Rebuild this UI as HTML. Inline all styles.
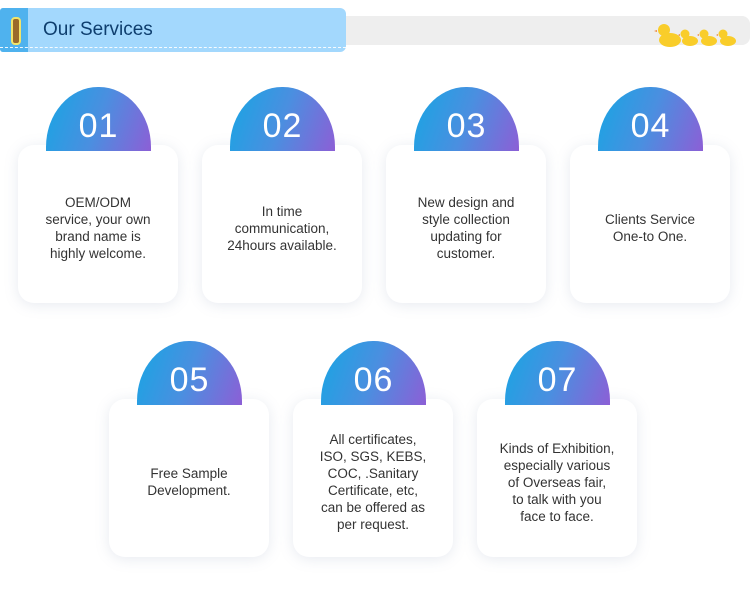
<!DOCTYPE html>
<html><head><meta charset="utf-8"><style>
body{margin:0;width:750px;height:595px;background:#fff;position:relative;overflow:hidden;font-family:"Liberation Sans",sans-serif}
.card{position:absolute;width:160px;height:158px;background:#fff;border-radius:16px;box-shadow:0 2px 14px rgba(120,140,170,.18);display:flex;align-items:center;justify-content:center;text-align:center;color:#333;font-size:13.5px;line-height:17px}
.card p{margin:0;padding:0 12px;position:relative;top:4px}
.blob{position:absolute;width:105px;height:64px;border-radius:52px 52px 0 0/60px 60px 0 0;background:linear-gradient(110deg,#16a6e4 0%,#4a8fe0 50%,#8c5fd6 100%);color:#fff;font-size:34px;display:flex;align-items:center;justify-content:center;padding-top:14px;box-sizing:border-box;letter-spacing:1px}
</style></head><body>
<div style="position:absolute;left:340px;top:16px;width:410px;height:29px;background:#eeeeee;border-radius:0 8px 8px 0"></div>
<div style="position:absolute;left:0;top:8px;width:346px;height:44px;background:#a3d8fd;border-radius:3px 6px 6px 3px"></div>
<div style="position:absolute;left:0;top:8px;width:28px;height:44px;background:#4fb2ee;border-radius:3px 0 0 3px"></div>
<div style="position:absolute;left:0;top:47px;width:346px;border-top:1px dashed rgba(255,255,255,.9)"></div>
<div style="position:absolute;left:11px;top:17px;width:6px;height:24px;background:#9a6a2a;border:2px solid #f1e46a;border-radius:4px"></div>
<div style="position:absolute;left:43px;top:19px;font-size:19px;color:#0e3e6e">Our Services</div>
<svg style="position:absolute;left:650px;top:20px" width="92" height="28" viewBox="0 0 92 28">
<g fill="#f9cd2a"><circle cx="14" cy="10" r="6"/><ellipse cx="20" cy="20" rx="11" ry="7"/>
<circle cx="35" cy="14" r="4.5"/><ellipse cx="40" cy="21" rx="8" ry="5"/>
<circle cx="54" cy="14" r="4.5"/><ellipse cx="59" cy="21" rx="8" ry="5"/>
<circle cx="73" cy="14" r="4.5"/><ellipse cx="78" cy="21" rx="8" ry="5"/></g>
<g fill="#f08a3a"><path d="M7 10l-3 1 3 1z"/><path d="M30 14l-2 1 2 1z"/><path d="M49 14l-2 1 2 1z"/><path d="M68 14l-2 1 2 1z"/></g>
</svg>

<div class="card" style="left:18px;top:145px"><p>OEM/ODM<br>service, your own<br>brand name is<br>highly welcome.</p></div>
<div class="blob" style="left:46px;top:87px">01</div>
<div class="card" style="left:202px;top:145px"><p>In time<br>communication,<br>24hours available.</p></div>
<div class="blob" style="left:230px;top:87px">02</div>
<div class="card" style="left:386px;top:145px"><p>New design and<br>style collection<br>updating for<br>customer.</p></div>
<div class="blob" style="left:414px;top:87px">03</div>
<div class="card" style="left:570px;top:145px"><p>Clients Service<br>One-to One.</p></div>
<div class="blob" style="left:598px;top:87px">04</div>

<div class="card" style="left:109px;top:399px"><p>Free Sample<br>Development.</p></div>
<div class="blob" style="left:137px;top:341px">05</div>
<div class="card" style="left:293px;top:399px"><p>All certificates,<br>ISO, SGS, KEBS,<br>COC, .Sanitary<br>Certificate, etc,<br>can be offered as<br>per request.</p></div>
<div class="blob" style="left:321px;top:341px">06</div>
<div class="card" style="left:477px;top:399px"><p>Kinds of Exhibition,<br>especially various<br>of Overseas fair,<br>to talk with you<br>face to face.</p></div>
<div class="blob" style="left:505px;top:341px">07</div>
</body></html>
